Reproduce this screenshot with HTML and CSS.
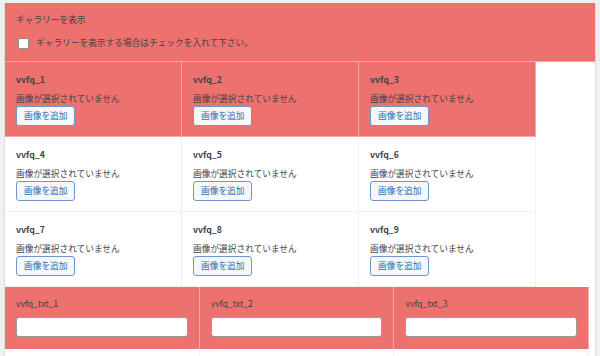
FILE: index.html
```html
<!DOCTYPE html>
<html lang="ja">
<head>
<meta charset="utf-8">
<link rel="stylesheet" href="styles.css">
</head>
<body>
<div class="box">
  <div class="header">
    <div class="title">ギャラリーを表示</div>
    <label class="check-row"><input type="checkbox" class="check"><span>ギャラリーを表示する場合はチェックを入れて下さい。</span></label>
  </div>
  <div class="grid">
    <div class="cell red"><div class="name">vvfq_1</div><div class="status">画像が選択されていません</div><button class="btn">画像を追加</button></div>
    <div class="cell red"><div class="name">vvfq_2</div><div class="status">画像が選択されていません</div><button class="btn">画像を追加</button></div>
    <div class="cell red"><div class="name">vvfq_3</div><div class="status">画像が選択されていません</div><button class="btn">画像を追加</button></div>
    <div class="cell"><div class="name">vvfq_4</div><div class="status">画像が選択されていません</div><button class="btn">画像を追加</button></div>
    <div class="cell"><div class="name">vvfq_5</div><div class="status">画像が選択されていません</div><button class="btn">画像を追加</button></div>
    <div class="cell"><div class="name">vvfq_6</div><div class="status">画像が選択されていません</div><button class="btn">画像を追加</button></div>
    <div class="cell"><div class="name">vvfq_7</div><div class="status">画像が選択されていません</div><button class="btn">画像を追加</button></div>
    <div class="cell"><div class="name">vvfq_8</div><div class="status">画像が選択されていません</div><button class="btn">画像を追加</button></div>
    <div class="cell"><div class="name">vvfq_9</div><div class="status">画像が選択されていません</div><button class="btn">画像を追加</button></div>
  </div>
  <div class="txt-row">
    <div class="tcell red"><div class="tname">vvfq_txt_1</div><input class="field" type="text"></div>
    <div class="tcell red"><div class="tname">vvfq_txt_2</div><input class="field" type="text"></div>
    <div class="tcell red"><div class="tname">vvfq_txt_3</div><input class="field" type="text"></div>
  </div>
  <div class="txt-row">
    <div class="tcell blank"></div>
    <div class="tcell blank"></div>
    <div class="tcell blank"></div>
  </div>
</div>
</body>
</html>
```

FILE: styles.css
```css
html, body {
  margin: 0;
  padding: 0;
  background: #f0f0f1;
  overflow: hidden;
}
body {
  font-family: "Noto Sans CJK JP", "Liberation Sans", sans-serif;
  font-size: 8.7px;
  color: #3c434a;
}
.box {
  margin: 3px 0 0 4px;
  width: 590px;
  height: 353px;
  overflow: hidden;
  background: #fff;
  border-left: 1px solid #dcdcde;
  border-right: 1px solid #dcdcde;
}
.header {
  background: #ed716d;
  height: 58px;
  box-sizing: content-box;
  padding: 0 11px;
  border-bottom: 1px solid #f3a3a0;
}
.title {
  padding-top: 11px;
  line-height: 12px;
}
.check-row {
  display: flex;
  align-items: center;
  margin-top: 11px;
  margin-left: 2px;
  line-height: 12px;
  gap: 7px;
}
.check {
  appearance: none;
  -webkit-appearance: none;
  margin: 0;
  width: 11px;
  height: 11px;
  border: 1px solid #8c8f94;
  border-radius: 2px;
  background: #fff;
  box-sizing: border-box;
}
.grid {
  display: flex;
  flex-wrap: wrap;
}
.cell {
  width: 177px;
  box-sizing: border-box;
  padding: 12px 11px 10px;
  border-right: 1px solid #f0f0f1;
  border-bottom: 1px solid #f0f0f1;
  display: flex;
  flex-direction: column;
  align-items: flex-start;
}
.cell.red {
  background: #ed716d;
  border-color: rgba(255, 255, 255, 0.4);
}
.name {
  line-height: 12px;
  font-weight: 600;
  color: #3c434a;
  margin-bottom: 7px;
}
.status {
  line-height: 12px;
  margin-bottom: 1px;
}
.btn {
  font-family: inherit;
  font-size: 8.7px;
  height: 20px;
  padding: 0 7px;
  margin: 0;
  line-height: 18px;
  color: #2a6fb6;
  background: #f6f7f7;
  border: 1px solid #6e96cb;
  border-radius: 3px;
}
.txt-row {
  display: flex;
}
.tcell {
  width: 33%;
  box-sizing: border-box;
  padding: 11px 11px 12px;
  border-right: 1px solid #f0f0f1;
}
.tcell.red {
  background: #ed716d;
  border-color: rgba(255, 255, 255, 0.4);
}
.tcell.blank {
  height: 20px;
}
.tname {
  line-height: 12px;
  margin-bottom: 7px;
}
.field {
  display: block;
  width: 100%;
  height: 20px;
  box-sizing: border-box;
  margin: 0;
  border: 1px solid #9a9ca0;
  border-radius: 3px;
  background: #fff;
}
```
